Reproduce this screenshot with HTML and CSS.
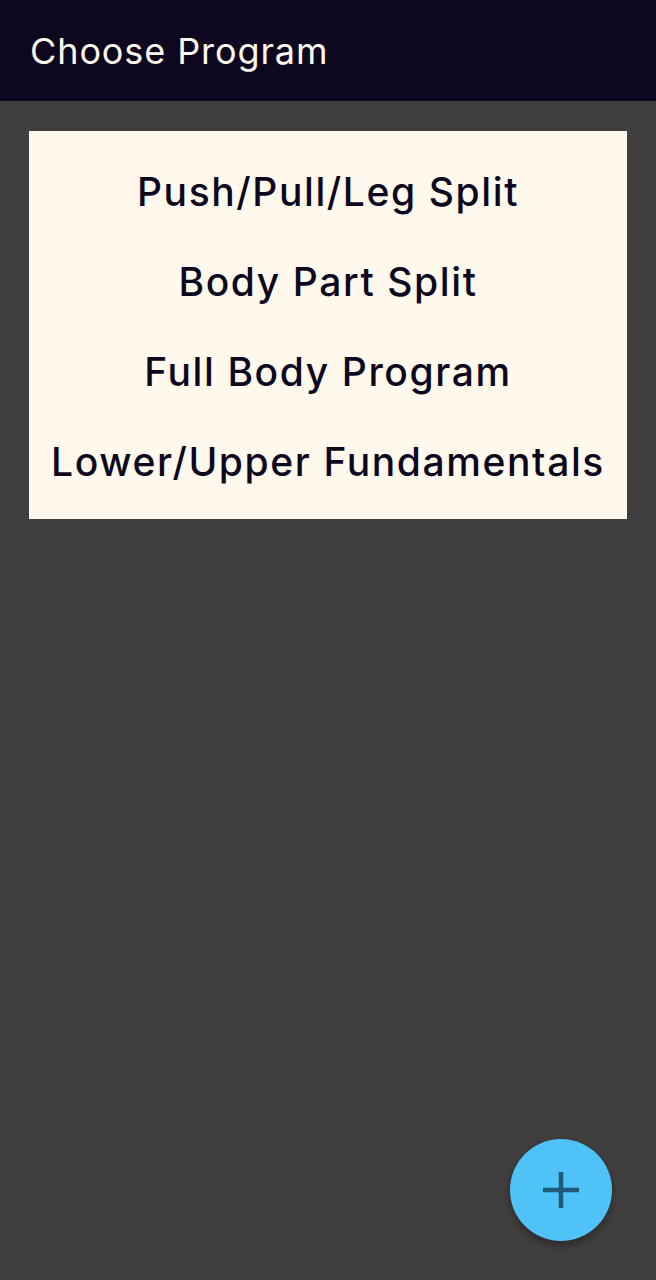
FILE: index.html
```html
<!DOCTYPE html>
<html>
<head>
<meta charset="utf-8">
<link rel="stylesheet" href="styles.css">
</head>
<body>
<header class="appbar"><h1 class="title">Choose Program</h1></header>
<main class="content">
  <ul class="programs">
    <li class="program">Push/Pull/Leg Split</li>
    <li class="program">Body Part Split</li>
    <li class="program">Full Body Program</li>
    <li class="program">Lower/Upper Fundamentals</li>
  </ul>
</main>
<button class="fab" aria-label="Add program">
  <svg width="40" height="40" viewBox="0 0 40 40"><path d="M20 2v36M2 20h36" stroke="#1f5a78" stroke-width="4.5" fill="none"/></svg>
</button>
</body>
</html>
```
FILE: styles.css
```css
html, body { margin: 0; padding: 0; }
body {
  background: #403e3f;
  font-family: "Inter", "DejaVu Sans", sans-serif;
  height: 1280px;
}
.appbar {
  height: 101px;
  background: #0d0820;
  display: flex;
  align-items: center;
  padding-left: 30px;
}
.title {
  margin: 0;
  color: #fff8ee;
  font-weight: 400;
  font-size: 36px;
  letter-spacing: 0.9px;
}
.content { padding: 30px 29px 0 29px; }
.programs {
  list-style: none;
  margin: 0;
  padding: 15px 0 13px;
  background: #fff8ec;
}
.program {
  height: 90px;
  display: flex;
  align-items: center;
  justify-content: center;
  color: #0d0820;
  font-size: 39px;
  font-weight: 500;
  letter-spacing: 1.6px;
}
.fab {
  position: fixed;
  right: 44px;
  bottom: 39px;
  width: 102px;
  height: 102px;
  border-radius: 50%;
  border: none;
  background: #4fc3f7;
  display: flex;
  align-items: center;
  justify-content: center;
  box-shadow: 0 4px 8px rgba(0,0,0,0.35);
  padding: 0;
}
```
